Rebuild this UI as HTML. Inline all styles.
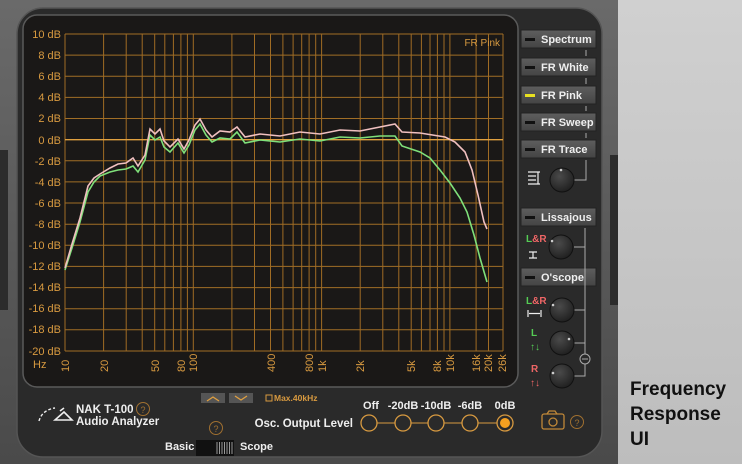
<!DOCTYPE html>
<html><head><meta charset="utf-8"><style>
html,body{margin:0;padding:0;width:742px;height:464px;overflow:hidden;background:#c8c8c8}
svg{display:block}
text{font-family:"Liberation Sans",sans-serif}
</style></head><body>
<svg width="742" height="464" viewBox="0 0 742 464" xmlns="http://www.w3.org/2000/svg">
<defs>
<linearGradient id="rg" x1="0" y1="0" x2="0" y2="1"><stop offset="0" stop-color="#d0d0d0"/><stop offset="1" stop-color="#bdbdbd"/></linearGradient>
<linearGradient id="bz" x1="0" y1="0" x2="0" y2="1"><stop offset="0" stop-color="#6a6a6a"/><stop offset="1" stop-color="#4a4a4a"/></linearGradient>
<linearGradient id="btn" x1="0" y1="0" x2="0" y2="1"><stop offset="0" stop-color="#5e5e5e"/><stop offset="1" stop-color="#444"/></linearGradient>
<radialGradient id="kn" cx="0.4" cy="0.35" r="0.7"><stop offset="0" stop-color="#4a4a4a"/><stop offset="1" stop-color="#1e1e1e"/></radialGradient>
</defs>
<rect width="742" height="464" fill="url(#rg)"/>
<rect x="0" y="0" width="618" height="464" fill="url(#bz)"/>
<rect x="0" y="150" width="8" height="160" fill="#2c2c2c"/>
<rect x="610" y="155" width="8" height="150" fill="#2c2c2c"/>
<rect x="17" y="8" width="585" height="449" rx="26" fill="#2a2a2a" stroke="#555" stroke-width="1.5"/>
<rect x="23" y="15" width="495" height="372" rx="14" fill="#1a1817" stroke="#5a5a5a" stroke-width="1.5"/>
<g stroke="#b07828" stroke-width="1" opacity="0.9">
<line x1="65" y1="34" x2="503" y2="34"/><line x1="65" y1="55.1" x2="503" y2="55.1"/><line x1="65" y1="76.3" x2="503" y2="76.3"/><line x1="65" y1="97.4" x2="503" y2="97.4"/><line x1="65" y1="118.5" x2="503" y2="118.5"/>
<line x1="65" y1="160.8" x2="503" y2="160.8"/><line x1="65" y1="181.9" x2="503" y2="181.9"/><line x1="65" y1="203" x2="503" y2="203"/><line x1="65" y1="224.2" x2="503" y2="224.2"/><line x1="65" y1="245.3" x2="503" y2="245.3"/><line x1="65" y1="266.4" x2="503" y2="266.4"/><line x1="65" y1="287.6" x2="503" y2="287.6"/><line x1="65" y1="308.7" x2="503" y2="308.7"/><line x1="65" y1="329.8" x2="503" y2="329.8"/><line x1="65" y1="351" x2="503" y2="351"/>
</g>
<g stroke="#a06c24" stroke-width="1">
<line x1="65" y1="34" x2="65" y2="351"/><line x1="103.6" y1="34" x2="103.6" y2="351"/><line x1="126.2" y1="34" x2="126.2" y2="351"/><line x1="142.2" y1="34" x2="142.2" y2="351"/><line x1="154.7" y1="34" x2="154.7" y2="351"/><line x1="164.8" y1="34" x2="164.8" y2="351"/><line x1="173.4" y1="34" x2="173.4" y2="351"/><line x1="180.9" y1="34" x2="180.9" y2="351"/><line x1="187.4" y1="34" x2="187.4" y2="351"/><line x1="193.3" y1="34" x2="193.3" y2="351"/>
<line x1="231.9" y1="34" x2="231.9" y2="351"/><line x1="254.5" y1="34" x2="254.5" y2="351"/><line x1="270.5" y1="34" x2="270.5" y2="351"/><line x1="282.9" y1="34" x2="282.9" y2="351"/><line x1="293.1" y1="34" x2="293.1" y2="351"/><line x1="301.7" y1="34" x2="301.7" y2="351"/><line x1="309.1" y1="34" x2="309.1" y2="351"/><line x1="315.7" y1="34" x2="315.7" y2="351"/><line x1="321.6" y1="34" x2="321.6" y2="351"/>
<line x1="360.2" y1="34" x2="360.2" y2="351"/><line x1="382.8" y1="34" x2="382.8" y2="351"/><line x1="398.8" y1="34" x2="398.8" y2="351"/><line x1="411.2" y1="34" x2="411.2" y2="351"/><line x1="421.4" y1="34" x2="421.4" y2="351"/><line x1="430" y1="34" x2="430" y2="351"/><line x1="437.4" y1="34" x2="437.4" y2="351"/><line x1="444" y1="34" x2="444" y2="351"/><line x1="449.9" y1="34" x2="449.9" y2="351"/>
<line x1="476.1" y1="34" x2="476.1" y2="351"/><line x1="488.5" y1="34" x2="488.5" y2="351"/><line x1="503" y1="34" x2="503" y2="351"/>
</g>
<line x1="65" y1="139.7" x2="503" y2="139.7" stroke="#e0a040" stroke-width="1.3"/>
<g fill="#d89a40" font-size="11" text-anchor="end">
<text x="61" y="38">10 dB</text><text x="61" y="59">8 dB</text><text x="61" y="80">6 dB</text><text x="61" y="101">4 dB</text><text x="61" y="122">2 dB</text><text x="61" y="144">0 dB</text><text x="61" y="165">-2 dB</text><text x="61" y="186">-4 dB</text><text x="61" y="207">-6 dB</text><text x="61" y="228">-8 dB</text><text x="61" y="249">-10 dB</text><text x="61" y="270">-12 dB</text><text x="61" y="291">-14 dB</text><text x="61" y="312">-16 dB</text><text x="61" y="333">-18 dB</text><text x="61" y="355">-20 dB</text>
</g>
<text x="33" y="368" fill="#d89a40" font-size="11">Hz</text>
<text x="500" y="46" fill="#d89a40" font-size="10" text-anchor="end">FR Pink</text>
<g fill="#d89a40" font-size="11">
<text transform="translate(69,372) rotate(-90)">10</text>
<text transform="translate(108,372) rotate(-90)">20</text>
<text transform="translate(159,372) rotate(-90)">50</text>
<text transform="translate(185,372) rotate(-90)">80</text>
<text transform="translate(197,372) rotate(-90)">100</text>
<text transform="translate(275,372) rotate(-90)">400</text>
<text transform="translate(313,372) rotate(-90)">800</text>
<text transform="translate(326,372) rotate(-90)">1k</text>
<text transform="translate(364,372) rotate(-90)">2k</text>
<text transform="translate(415,372) rotate(-90)">5k</text>
<text transform="translate(441,372) rotate(-90)">8k</text>
<text transform="translate(454,372) rotate(-90)">10k</text>
<text transform="translate(480,372) rotate(-90)">16k</text>
<text transform="translate(492,372) rotate(-90)">20k</text>
<text transform="translate(506,372) rotate(-90)">26k</text>
</g>
<polyline fill="none" stroke="#7fe07a" stroke-width="1.6" points="65,270 72,248 80,222 88,192 94,182 100,176 110,172 118,170 126,169 133,166 138,172 145,160 150,135 155,140 160,137 164,147 170,152 178,143 184,153 189,145 195,130 200,124 206,135 212,142 220,138 230,139 237,132 245,143 260,140 280,142 300,139 320,141 340,137 360,138 380,136 395,136 402,146 420,152 430,158 440,170 450,183 460,198 467,212 474,235 480,258 487,282"/>
<polyline fill="none" stroke="#f0c0c0" stroke-width="1.6" points="65,268 72,244 80,218 88,186 94,178 100,174 110,168 118,164 126,163 133,158 138,166 145,155 150,129 155,134 160,129 164,141 170,147 178,139 184,149 189,140 195,125 200,119 206,130 212,137 220,131 230,132 237,127 245,137 260,134 280,136 300,132 320,134 340,130 360,131 380,127 395,124 402,132 420,133 445,137 455,142 465,152 472,170 478,195 484,222 487,229"/>
<!-- right buttons -->
<g font-size="11" font-weight="bold" fill="#eee">
<g><rect x="521" y="30" width="75" height="18" fill="url(#btn)" stroke="#222"/><rect x="525" y="38" width="10" height="3" fill="#111"/><text x="541" y="43">Spectrum</text></g>
<g><rect x="521" y="58" width="75" height="18" fill="url(#btn)" stroke="#222"/><rect x="525" y="66" width="10" height="3" fill="#111"/><text x="541" y="71">FR White</text></g>
<g><rect x="521" y="86" width="75" height="18" fill="url(#btn)" stroke="#222"/><rect x="525" y="94" width="10" height="3" fill="#e8e020"/><text x="541" y="99">FR Pink</text></g>
<g><rect x="521" y="113" width="75" height="18" fill="url(#btn)" stroke="#222"/><rect x="525" y="121" width="10" height="3" fill="#111"/><text x="541" y="126">FR Sweep</text></g>
<g><rect x="521" y="140" width="75" height="18" fill="url(#btn)" stroke="#222"/><rect x="525" y="148" width="10" height="3" fill="#111"/><text x="541" y="153">FR Trace</text></g>
<g><rect x="521" y="208" width="75" height="18" fill="url(#btn)" stroke="#222"/><rect x="525" y="216" width="10" height="3" fill="#111"/><text x="541" y="221">Lissajous</text></g>
<g><rect x="521" y="268" width="75" height="18" fill="url(#btn)" stroke="#222"/><rect x="525" y="276" width="10" height="3" fill="#111"/><text x="541" y="281">O'scope</text></g>
</g>
<g stroke="#aaa" stroke-width="1" fill="none">
<line x1="586" y1="50" x2="586" y2="56"/><line x1="586" y1="78" x2="586" y2="84"/><line x1="586" y1="106" x2="586" y2="111"/><line x1="586" y1="133" x2="586" y2="138"/>
<polyline points="586,160 586,180 574,180"/>
<polyline points="585,228 585,376 574,376"/>
<line x1="574" y1="247" x2="585" y2="247"/><line x1="574" y1="310" x2="585" y2="310"/><line x1="574" y1="343" x2="585" y2="343"/>
<circle cx="585" cy="359" r="5" fill="#2a2a2a"/><line x1="582" y1="359" x2="588" y2="359"/>
</g>
<g stroke="#111" stroke-width="1">
<circle cx="562" cy="180" r="12" fill="url(#kn)"/><circle cx="561" cy="247" r="12" fill="url(#kn)"/><circle cx="562" cy="310" r="12" fill="url(#kn)"/><circle cx="562" cy="343" r="12" fill="url(#kn)"/><circle cx="562" cy="376" r="12" fill="url(#kn)"/>
</g>
<g fill="#ccc"><circle cx="561" cy="170" r="1.3"/><circle cx="552" cy="241" r="1.3"/><circle cx="553" cy="305" r="1.3"/><circle cx="569" cy="339" r="1.3"/><circle cx="553" cy="373" r="1.3"/></g>
<g stroke="#eee" stroke-width="1.2" fill="none"><path d="M528 172h8M528 176h8M528 180h8M528 184h8M538 172v12M536 172h4M536 184h4"/><path d="M529 258h8M533 258v-6M529 252h8"/><path d="M528 310v7M541 310v7M529 313.5h11"/></g>
<text x="526" y="242" font-size="10" font-weight="bold" fill="#5c5"><tspan>L</tspan><tspan fill="#e66">&amp;R</tspan></text>
<text x="526" y="304" font-size="10" font-weight="bold" fill="#5c5"><tspan>L</tspan><tspan fill="#e66">&amp;R</tspan></text>
<text x="531" y="336" font-size="10" font-weight="bold" fill="#5c5">L</text>
<text x="530" y="350" font-size="10" font-weight="bold" fill="#5c5">↑↓</text>
<text x="531" y="372" font-size="10" font-weight="bold" fill="#e66">R</text>
<text x="530" y="386" font-size="10" font-weight="bold" fill="#e66">↑↓</text>
<!-- bottom -->
<path d="M39 421 Q42 410 55 408" stroke="#eee" stroke-width="1.4" fill="none" stroke-dasharray="3 2"/>
<path d="M55 420 L64 412 L72 420 Z M60 411 L64 408" stroke="#eee" stroke-width="1.6" fill="none"/>
<text x="76" y="413" font-size="11.5" font-weight="bold" fill="#eee">NAK T-100</text>
<circle cx="143" cy="409" r="6.5" stroke="#a07030" fill="none"/><text x="143" y="413" font-size="9" fill="#a07030" text-anchor="middle">?</text>
<text x="76" y="425" font-size="11.5" font-weight="bold" fill="#eee">Audio Analyzer</text>
<rect x="201" y="393" width="24" height="10" fill="#555"/><rect x="229" y="393" width="24" height="10" fill="#555"/>
<path d="M207 401l6-4 6 4M235 396l6 4 6-4" stroke="#e0a040" stroke-width="1.3" fill="none"/>
<rect x="266" y="395" width="6" height="6" fill="none" stroke="#d89a40"/>
<text x="274" y="401" font-size="8.5" font-weight="bold" fill="#d89a40">Max.40kHz</text>
<circle cx="216" cy="428" r="6.5" stroke="#a07030" fill="none"/><text x="216" y="432" font-size="9" fill="#a07030" text-anchor="middle">?</text>
<text x="165" y="450" font-size="11" font-weight="bold" fill="#eee">Basic</text>
<rect x="196" y="440" width="38" height="16" fill="#111"/>
<path d="M217 442v12M219.5 442v12M222 442v12M224.5 442v12M227 442v12M229.5 442v12M232 442v12" stroke="#999"/>
<text x="240" y="450" font-size="11" font-weight="bold" fill="#eee">Scope</text>
<text x="353" y="427" font-size="11.5" font-weight="bold" fill="#eee" text-anchor="end">Osc. Output Level</text>
<g font-size="11" font-weight="bold" fill="#eee" text-anchor="middle"><text x="371" y="409">Off</text><text x="403" y="409">-20dB</text><text x="436" y="409">-10dB</text><text x="470" y="409">-6dB</text><text x="505" y="409">0dB</text></g>
<path d="M377 423H395M411 423H428M444 423H462M478 423H497" stroke="#d89a40"/>
<g stroke="#d89a40" stroke-width="1.3" fill="none"><circle cx="369" cy="423" r="8"/><circle cx="403" cy="423" r="8"/><circle cx="436" cy="423" r="8"/><circle cx="470" cy="423" r="8"/><circle cx="505" cy="423" r="8"/></g>
<circle cx="505" cy="423" r="5" fill="#f5a020"/>
<g stroke="#c08838" stroke-width="1.3" fill="none"><rect x="542" y="414" width="22" height="15" rx="2"/><path d="M547 414l2-3h6l2 3"/><circle cx="553" cy="422" r="4"/></g>
<circle cx="577" cy="422" r="6.5" stroke="#a07030" fill="none"/><text x="577" y="426" font-size="9" fill="#a07030" text-anchor="middle">?</text>
<g font-size="19" font-weight="bold" fill="#111"><text x="630" y="395">Frequency</text><text x="630" y="420">Response</text><text x="630" y="445">UI</text></g>
</svg>
</body></html>
